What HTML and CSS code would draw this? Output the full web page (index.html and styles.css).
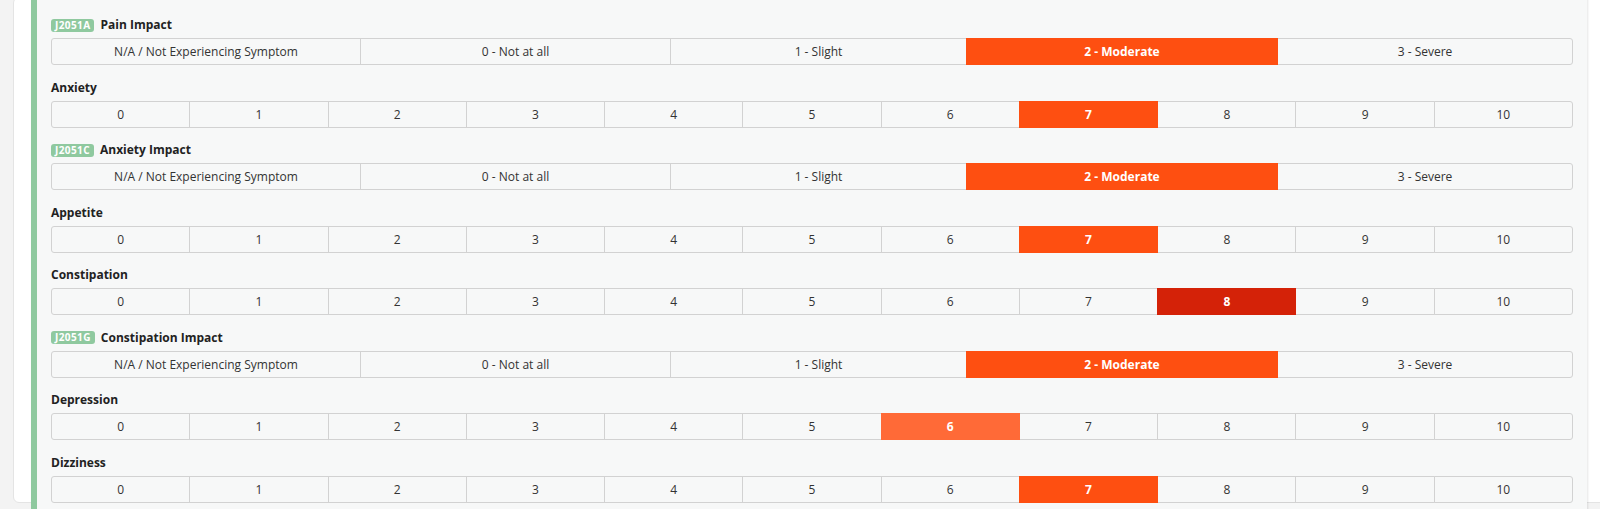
FILE: index.html
```html
<!DOCTYPE html>
<html>
<head>
<meta charset="utf-8">
<link rel="stylesheet" href="styles.css">
</head>
<body>
<div class="card">
  <div class="panel">
    <div class="item">
      <div class="label"><span class="badge">J2051A</span>Pain Impact</div>
      <div class="opts opts-5">
        <div class="cell">N/A / Not Experiencing Symptom</div>
        <div class="cell">0 - Not at all</div>
        <div class="cell">1 - Slight</div>
        <div class="cell sel">2 - Moderate</div>
        <div class="cell">3 - Severe</div>
      </div>
    </div>
    <div class="item">
      <div class="label">Anxiety</div>
      <div class="opts opts-11">
        <div class="cell">0</div><div class="cell">1</div><div class="cell">2</div><div class="cell">3</div><div class="cell">4</div><div class="cell">5</div><div class="cell">6</div><div class="cell sel">7</div><div class="cell">8</div><div class="cell">9</div><div class="cell">10</div>
      </div>
    </div>
    <div class="item">
      <div class="label"><span class="badge">J2051C</span>Anxiety Impact</div>
      <div class="opts opts-5">
        <div class="cell">N/A / Not Experiencing Symptom</div>
        <div class="cell">0 - Not at all</div>
        <div class="cell">1 - Slight</div>
        <div class="cell sel">2 - Moderate</div>
        <div class="cell">3 - Severe</div>
      </div>
    </div>
    <div class="item">
      <div class="label">Appetite</div>
      <div class="opts opts-11">
        <div class="cell">0</div><div class="cell">1</div><div class="cell">2</div><div class="cell">3</div><div class="cell">4</div><div class="cell">5</div><div class="cell">6</div><div class="cell sel">7</div><div class="cell">8</div><div class="cell">9</div><div class="cell">10</div>
      </div>
    </div>
    <div class="item">
      <div class="label">Constipation</div>
      <div class="opts opts-11">
        <div class="cell">0</div><div class="cell">1</div><div class="cell">2</div><div class="cell">3</div><div class="cell">4</div><div class="cell">5</div><div class="cell">6</div><div class="cell">7</div><div class="cell sel sel-high">8</div><div class="cell">9</div><div class="cell">10</div>
      </div>
    </div>
    <div class="item">
      <div class="label"><span class="badge">J2051G</span>Constipation Impact</div>
      <div class="opts opts-5">
        <div class="cell">N/A / Not Experiencing Symptom</div>
        <div class="cell">0 - Not at all</div>
        <div class="cell">1 - Slight</div>
        <div class="cell sel">2 - Moderate</div>
        <div class="cell">3 - Severe</div>
      </div>
    </div>
    <div class="item">
      <div class="label">Depression</div>
      <div class="opts opts-11">
        <div class="cell">0</div><div class="cell">1</div><div class="cell">2</div><div class="cell">3</div><div class="cell">4</div><div class="cell">5</div><div class="cell sel sel-low">6</div><div class="cell">7</div><div class="cell">8</div><div class="cell">9</div><div class="cell">10</div>
      </div>
    </div>
    <div class="item">
      <div class="label">Dizziness</div>
      <div class="opts opts-11">
        <div class="cell">0</div><div class="cell">1</div><div class="cell">2</div><div class="cell">3</div><div class="cell">4</div><div class="cell">5</div><div class="cell">6</div><div class="cell sel">7</div><div class="cell">8</div><div class="cell">9</div><div class="cell">10</div>
      </div>
    </div>
  </div>
</div>
</body>
</html>
```

FILE: styles.css
```css
html, body {
  margin: 0;
  padding: 0;
  height: 509px;
  overflow: hidden;
}
body {
  background: #f3f3f3;
  font-family: "Open Sans", "Noto Sans", sans-serif;
  font-size: 12px;
  color: #333;
}
.card {
  box-sizing: border-box;
  margin: -3px 0 0 13px;
  width: 1600px;
  height: 506px;
  background: #fff;
  border: 1px solid #e4e4e4;
  border-radius: 6px;
  padding-left: 17px;
}
.panel {
  box-sizing: border-box;
  width: 1556px;
  height: 514px;
  background: #f7f8f8;
  border-left: 6px solid #8fc99f;
  box-shadow: 1px 0 2px rgba(0, 0, 0, 0.10);
  padding: 18px 14px 0 14px;
  overflow: hidden;
}
.item {
  margin-bottom: 13.5px;
}
.label {
  display: flex;
  align-items: center;
  gap: 6px;
  height: 18px;
  line-height: 18px;
  margin-bottom: 4px;
  font-weight: 700;
  color: #222;
}
.badge {
  display: inline-block;
  height: 13px;
  line-height: 13px;
  padding: 0 4px;
  border-radius: 3px;
  background: #8fc99f;
  color: #fff;
  font-size: 10px;
  font-weight: 700;
  letter-spacing: 0.4px;
}
.opts {
  display: grid;
  padding-left: 1px;
}
.opts-5 {
  grid-template-columns: 309fr 310fr 296fr 311fr 295fr;
}
.opts-11 {
  grid-template-columns: repeat(11, 1fr);
}
.cell {
  box-sizing: border-box;
  height: 27px;
  line-height: 25px;
  margin-left: -1px;
  border: 1px solid #d2d2d2;
  text-align: center;
  white-space: nowrap;
  background: #f7f8f8;
}
.cell:first-child {
  border-radius: 3px 0 0 3px;
}
.cell:last-child {
  border-radius: 0 3px 3px 0;
}
.sel {
  position: relative;
  z-index: 1;
  background: #fe4f11;
  border-color: #fe4f11;
  color: #fff;
  font-weight: 700;
}
.sel-high {
  background: #d42208;
  border-color: #d42208;
}
.sel-low {
  background: #ff6a37;
  border-color: #ff6a37;
}
```
